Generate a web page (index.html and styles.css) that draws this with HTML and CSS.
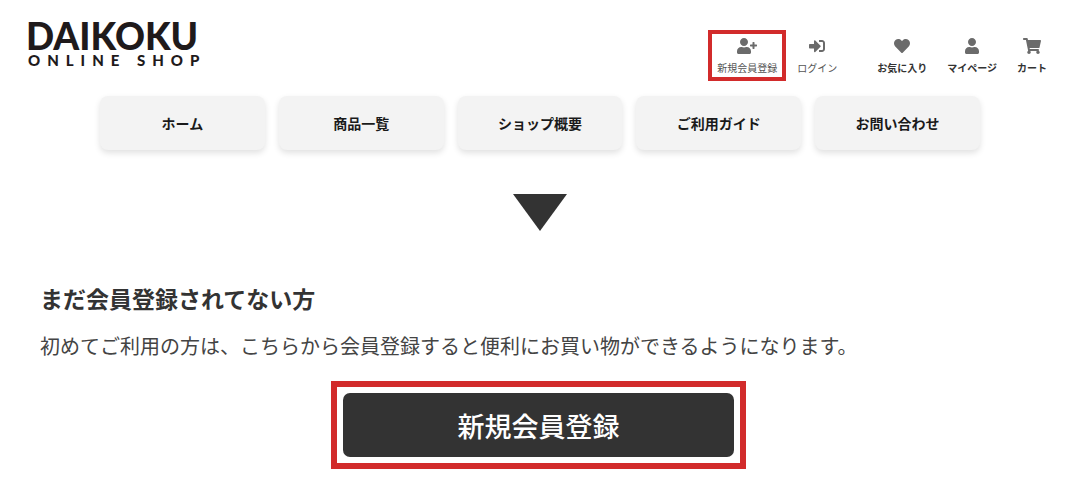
FILE: index.html
```html
<!DOCTYPE html>
<html lang="ja">
<head>
    <meta charset="UTF-8">
    <meta name="viewport" content="width=device-width, initial-scale=1.0">
    <title>DAIKOKU ONLINE SHOP</title>
    <link rel="stylesheet" href="styles.css">
</head>
<body>
    <header class="header">
        <a href="#" class="logo">
            <span class="logo-name">DAIKOKU</span>
            <span class="logo-sub">ONLINE SHOP</span>
        </a>
        <ul class="user-menu">
            <li>
                <a href="#" class="marked">
                    <svg viewBox="0 0 640 512" aria-hidden="true"><path d="M624 208h-64v-64c0-8.800-7.200-16-16-16h-32c-8.800 0-16 7.200-16 16v64h-64c-8.800 0-16 7.200-16 16v32c0 8.800 7.200 16 16 16h64v64c0 8.800 7.200 16 16 16h32c8.800 0 16-7.200 16-16v-64h64c8.800 0 16-7.200 16-16v-32c0-8.800-7.200-16-16-16zm-400 48c70.700 0 128-57.300 128-128S294.700 0 224 0 96 57.300 96 128s57.300 128 128 128zm89.600 32h-16.700c-22.200 10.200-46.900 16-72.900 16s-50.600-5.800-72.900-16h-16.700C60.200 288 0 348.200 0 422.400V464c0 26.500 21.500 48 48 48h352c26.500 0 48-21.500 48-48v-41.600c0-74.200-60.200-134.400-134.400-134.400z"/></svg>
                    新規会員登録
                </a>
            </li>
            <li>
                <a href="#">
                    <svg viewBox="0 0 512 512" aria-hidden="true"><path d="M416 448h-84c-6.600 0-12-5.400-12-12v-40c0-6.600 5.400-12 12-12h84c17.700 0 32-14.300 32-32V160c0-17.700-14.300-32-32-32h-84c-6.600 0-12-5.400-12-12V76c0-6.600 5.400-12 12-12h84c53 0 96 43 96 96v192c0 53-43 96-96 96zm-47-201L201 79c-15-15-41-4.500-41 17v96H24c-13.300 0-24 10.700-24 24v96c0 13.300 10.700 24 24 24h136v96c0 21.500 26 32 41 17l168-168c9.300-9.400 9.300-24.600 0-34z"/></svg>
                    ログイン
                </a>
            </li>
            <li class="member">
                <a href="#">
                    <svg viewBox="0 0 512 512" aria-hidden="true"><path d="M462.300 62.600C407.500 15.900 326 24.300 275.700 76.200L256 96.500l-19.700-20.300C186.100 24.300 104.500 15.900 49.700 62.600c-62.800 53.600-66.100 149.800-9.900 207.900l193.500 199.800c12.500 12.900 32.800 12.900 45.300 0l193.500-199.800c56.300-58.100 53-154.300-9.800-207.900z"/></svg>
                    お気に入り
                </a>
            </li>
            <li class="member">
                <a href="#">
                    <svg viewBox="0 0 448 512" aria-hidden="true"><path d="M224 256c70.700 0 128-57.300 128-128S294.700 0 224 0 96 57.300 96 128s57.300 128 128 128zm89.600 32h-16.700c-22.200 10.200-46.900 16-72.900 16s-50.600-5.800-72.900-16h-16.700C60.200 288 0 348.200 0 422.400V464c0 26.500 21.500 48 48 48h352c26.500 0 48-21.500 48-48v-41.600c0-74.200-60.200-134.400-134.400-134.400z"/></svg>
                    マイページ
                </a>
            </li>
            <li class="member">
                <a href="#">
                    <svg viewBox="0 0 576 512" aria-hidden="true"><path d="M528.120 301.319l47.273-208C578.806 78.301 567.391 64 551.990 64H159.208l-9.166-44.810C147.758 8.021 137.930 0 126.529 0H24C10.745 0 0 10.745 0 24v16c0 13.255 10.745 24 24 24h69.883l70.248 343.435C147.325 417.100 136 435.222 136 456c0 30.928 25.072 56 56 56s56-25.072 56-56c0-15.674-6.447-29.835-16.824-40h209.647C430.447 426.165 424 440.326 424 456c0 30.928 25.072 56 56 56s56-25.072 56-56c0-22.172-12.888-41.332-31.579-50.405l5.517-24.276c3.413-15.018-8.002-29.319-23.403-29.319H218.117l-6.545-32h293.145c11.206 0 19.920-7.754 23.403-18.681z"/></svg>
                    カート
                </a>
            </li>
        </ul>
    </header>

    <nav class="main-nav">
        <a href="#">ホーム</a>
        <a href="#">商品一覧</a>
        <a href="#">ショップ概要</a>
        <a href="#">ご利用ガイド</a>
        <a href="#">お問い合わせ</a>
    </nav>

    <div class="arrow"></div>

    <main class="register">
        <h2>まだ会員登録されてない方</h2>
        <p>初めてご利用の方は、こちらから会員登録すると便利にお買い物ができるようになります。</p>
        <div class="button-frame">
            <button type="button">新規会員登録</button>
        </div>
    </main>
</body>
</html>
```
FILE: styles.css
```css
* {
    box-sizing: border-box;
}
body {
    margin: 0;
    background-color: #fff;
    color: #333;
    font-family: "Noto Sans CJK JP", sans-serif;
}
a {
    color: inherit;
    text-decoration: none;
}
.header {
    display: flex;
    justify-content: space-between;
    align-items: flex-start;
    height: 96px;
    padding: 20px 24px 0 26px;
}
.logo {
    color: #1f1a1b;
    font-family: Lato, sans-serif;
    font-weight: 900;
}
.logo span {
    display: block;
    white-space: nowrap;
}
.logo-name {
    font-size: 37px;
    line-height: 32px;
}
.logo-sub {
    padding-left: 2px;
    font-size: 15px;
    line-height: 16px;
    letter-spacing: 7px;
}
.user-menu {
    display: flex;
    gap: 2px;
    margin: 10px 0 0;
    padding: 0;
    list-style: none;
    color: #555;
    font-size: 10px;
    line-height: 14px;
}
.user-menu a {
    display: flex;
    flex-direction: column;
    align-items: center;
    gap: 7px;
    padding: 4px 5px 2px;
    border: 4px solid transparent;
    white-space: nowrap;
}
.user-menu a.marked {
    border-color: #d22b2b;
}
.user-menu svg {
    height: 16px;
    fill: #6b6b6b;
}
.user-menu .member {
    color: #333;
    font-weight: bold;
}
.user-menu li:nth-child(3) {
    margin-left: 20px;
}
.main-nav {
    display: flex;
    gap: 14px;
    max-width: 880px;
    margin: 0 auto;
}
.main-nav a {
    flex: 1;
    border-radius: 8px;
    background-color: #f3f3f3;
    box-shadow: 0 3px 6px rgba(0, 0, 0, 0.12);
    color: #1a1a1a;
    font-size: 14px;
    font-weight: bold;
    line-height: 54px;
    text-align: center;
}
.arrow {
    width: 54px;
    height: 37px;
    margin: 44px auto 0;
    background-color: #333;
    clip-path: polygon(0 0, 100% 0, 50% 100%);
}
.register {
    padding: 50px 43px 22px 40px;
}
.register h2 {
    margin: 0;
    font-size: 23px;
    line-height: 34px;
}
.register p {
    margin: 16px 0 20px;
    color: #444;
    font-size: 20px;
    line-height: 30px;
}
.button-frame {
    max-width: 415px;
    margin: 0 auto;
    padding: 6px;
    border: 6px solid #d22b2b;
}
.button-frame button {
    display: block;
    width: 100%;
    height: 64px;
    border: none;
    border-radius: 7px;
    background-color: #333;
    color: #fff;
    font-family: inherit;
    font-size: 27px;
    font-weight: 500;
    cursor: pointer;
}
```
